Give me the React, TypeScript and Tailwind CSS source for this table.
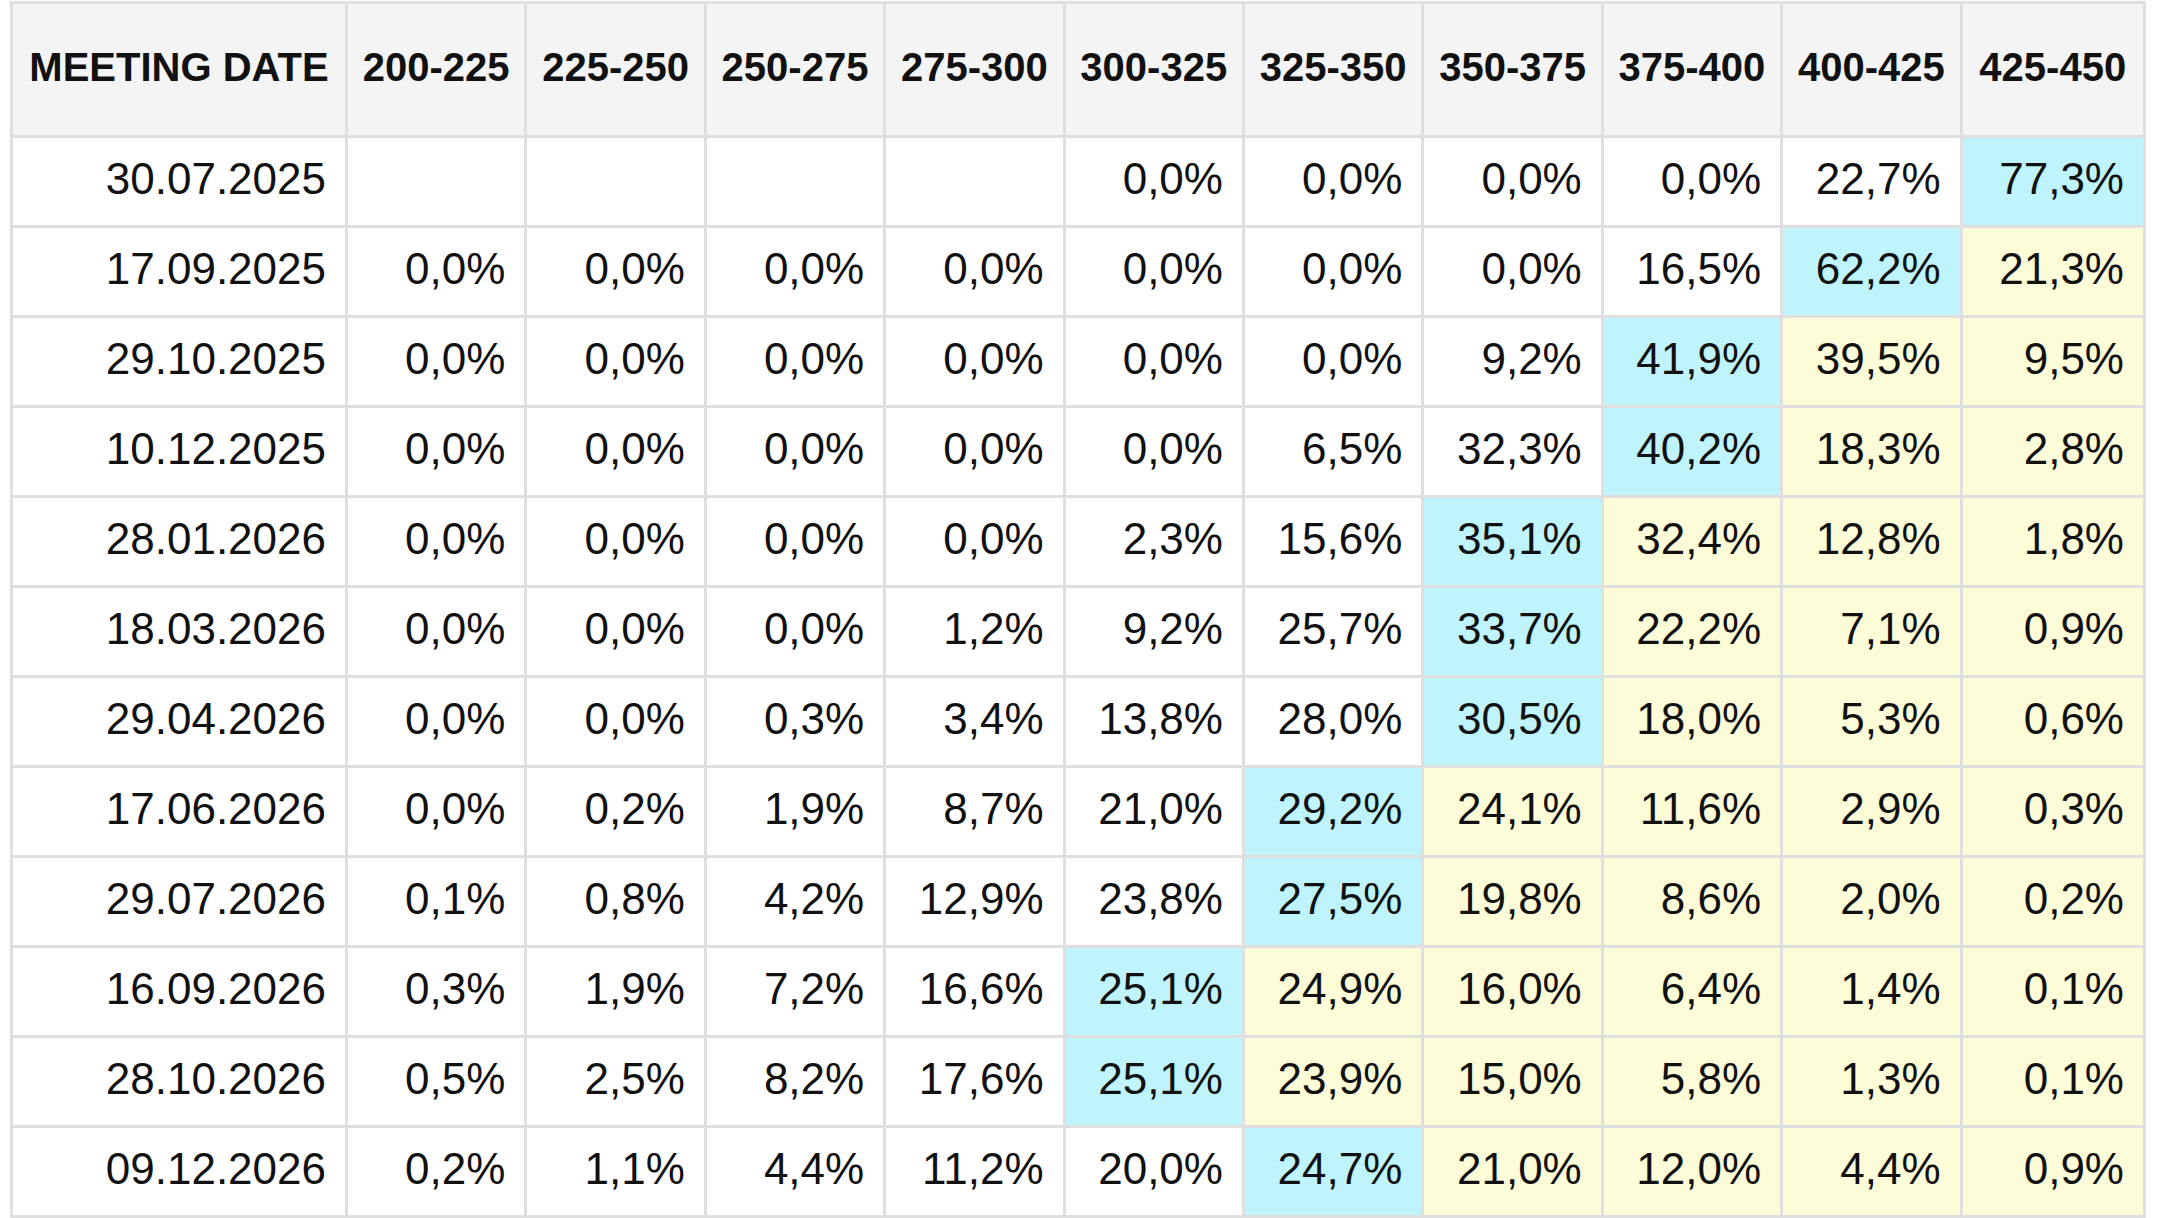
import React from 'react';

const ranges = [
  '200-225',
  '225-250',
  '250-275',
  '275-300',
  '300-325',
  '325-350',
  '350-375',
  '375-400',
  '400-425',
  '425-450',
];

const rows: { date: string; values: (string | null)[] }[] = [
  { date: '30.07.2025', values: [null, null, null, null, '0,0%', '0,0%', '0,0%', '0,0%', '22,7%', '77,3%'] },
  { date: '17.09.2025', values: ['0,0%', '0,0%', '0,0%', '0,0%', '0,0%', '0,0%', '0,0%', '16,5%', '62,2%', '21,3%'] },
  { date: '29.10.2025', values: ['0,0%', '0,0%', '0,0%', '0,0%', '0,0%', '0,0%', '9,2%', '41,9%', '39,5%', '9,5%'] },
  { date: '10.12.2025', values: ['0,0%', '0,0%', '0,0%', '0,0%', '0,0%', '6,5%', '32,3%', '40,2%', '18,3%', '2,8%'] },
  { date: '28.01.2026', values: ['0,0%', '0,0%', '0,0%', '0,0%', '2,3%', '15,6%', '35,1%', '32,4%', '12,8%', '1,8%'] },
  { date: '18.03.2026', values: ['0,0%', '0,0%', '0,0%', '1,2%', '9,2%', '25,7%', '33,7%', '22,2%', '7,1%', '0,9%'] },
  { date: '29.04.2026', values: ['0,0%', '0,0%', '0,3%', '3,4%', '13,8%', '28,0%', '30,5%', '18,0%', '5,3%', '0,6%'] },
  { date: '17.06.2026', values: ['0,0%', '0,2%', '1,9%', '8,7%', '21,0%', '29,2%', '24,1%', '11,6%', '2,9%', '0,3%'] },
  { date: '29.07.2026', values: ['0,1%', '0,8%', '4,2%', '12,9%', '23,8%', '27,5%', '19,8%', '8,6%', '2,0%', '0,2%'] },
  { date: '16.09.2026', values: ['0,3%', '1,9%', '7,2%', '16,6%', '25,1%', '24,9%', '16,0%', '6,4%', '1,4%', '0,1%'] },
  { date: '28.10.2026', values: ['0,5%', '2,5%', '8,2%', '17,6%', '25,1%', '23,9%', '15,0%', '5,8%', '1,3%', '0,1%'] },
  { date: '09.12.2026', values: ['0,2%', '1,1%', '4,4%', '11,2%', '20,0%', '24,7%', '21,0%', '12,0%', '4,4%', '0,9%'] },
];

const toNum = (v: string | null) => (v ? parseFloat(v.replace(',', '.').replace('%', '')) : -1);

// most likely target gets cyan, everything above it yellow
const cellBg = (idx: number, maxIdx: number) => {
  if (idx === maxIdx) return 'bg-[#bff4fd]';
  if (idx > maxIdx) return 'bg-[#fcfcd8]';
  return 'bg-white';
};

export default function App() {
  return (
    <div className="min-h-screen bg-white pl-[10px] pt-[1px] font-['Liberation_Sans',Arial,sans-serif] text-[#111]">
      <div className="grid w-[2136px] grid-cols-[332px_repeat(9,176.4px)_1fr] grid-rows-[131px_repeat(12,87px)] gap-[3px] bg-[#dfdfdf] p-[3px]">
        <div className="flex items-center justify-center bg-[#f4f4f4] pb-[6px] text-[40px] font-bold">
          MEETING DATE
        </div>
        {ranges.map((r) => (
          <div key={r} className="flex items-center justify-center bg-[#f4f4f4] pb-[6px] text-[40px] font-bold">
            {r}
          </div>
        ))}

        {rows.map((row) => {
          let maxIdx = 0;
          row.values.forEach((v, i) => {
            if (toNum(v) > toNum(row.values[maxIdx])) maxIdx = i;
          });
          return (
            <React.Fragment key={row.date}>
              <div className="flex items-center justify-end bg-white pr-[19px] pb-[6px] text-[44px]">
                {row.date}
              </div>
              {row.values.map((v, i) => (
                <div
                  key={i}
                  className={`flex items-center justify-end pr-[19px] pb-[6px] text-[44px] ${cellBg(i, maxIdx)}`}
                >
                  {v}
                </div>
              ))}
            </React.Fragment>
          );
        })}
      </div>
    </div>
  );
}
